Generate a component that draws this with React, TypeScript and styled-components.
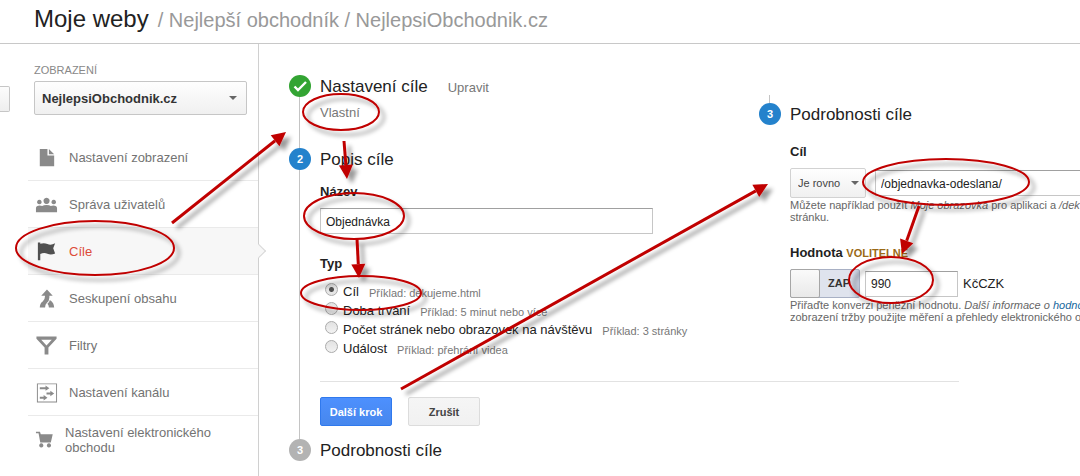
import React from "react";
import styled, { createGlobalStyle, css } from "styled-components";

const Global = createGlobalStyle`
  *, *::before, *::after { box-sizing: border-box; }
  body {
    margin: 0;
    background: #fff;
    color: #222;
    font: 13px/18px "Liberation Sans", Arial, sans-serif;
    overflow: hidden;
  }
  input, select, button { font-family: inherit; margin: 0; }
`;

const Page = styled.div`
  position: relative;
  min-height: 100vh;
  display: flex;
  flex-direction: column;
  overflow: hidden;
`;

const Header = styled.header`
  height: 44px;
  padding: 5px 34px 0;
  border-bottom: 1px solid #c8c8c8;
  white-space: nowrap;
`;

const Title = styled.h1`
  margin: 0;
  font-size: 24px;
  line-height: 28px;
  font-weight: 400;
`;

const Crumbs = styled.span`
  margin-left: 9px;
  font-size: 20px;
  color: #999;
`;

const Body = styled.div`
  flex: 1;
  display: flex;
`;

const Stub = styled.button`
  flex: none;
  width: 10px;
  height: 26px;
  margin-top: 42px;
  padding: 0;
  border: 1px solid #c6c6c6;
  border-left: 0;
  border-radius: 0 2px 2px 0;
  background: linear-gradient(#fcfcfc, #eee);
`;

const Sidebar = styled.nav`
  flex: none;
  width: 249px;
  padding: 18px 0 0 18px;
  border-right: 1px solid #d0d0d0;
`;

const ViewPicker = styled.div`
  padding: 0 11px 0 6px;
`;

const PickerLabel = styled.label`
  display: block;
  font-size: 11px;
  line-height: 16px;
  color: #888;
  margin-bottom: 3px;
`;

const SelectWrap = styled.div<{ $edge: number; $width?: number }>`
  position: relative;
  flex: none;
  width: ${(p) => (p.$width ? p.$width + "px" : "100%")};
  &::after {
    content: "";
    position: absolute;
    right: ${(p) => p.$edge}px;
    top: 50%;
    margin-top: -2px;
    border: 4px solid transparent;
    border-top-color: #666;
    border-bottom: 0;
    pointer-events: none;
  }
`;

const Select = styled.select<{ $strong?: boolean }>`
  appearance: none;
  display: block;
  width: 100%;
  height: ${(p) => (p.$strong ? 34 : 30)}px;
  padding: 0 7px;
  border: 1px solid ${(p) => (p.$strong ? "#c6c6c6" : "#d2d2d2")};
  border-radius: 2px;
  background: linear-gradient(#fefefe, #f0f0f0);
  color: ${(p) => (p.$strong ? "#333" : "#444")};
  font-size: ${(p) => (p.$strong ? 13 : 11)}px;
  font-weight: ${(p) => (p.$strong ? 700 : 400)};
`;

const Menu = styled.ul`
  list-style: none;
  margin: 19px 0 0;
  padding: 0;
`;

const MenuItem = styled.li<{ $active?: boolean }>`
  position: relative;
  height: 47px;
  border-bottom: 1px solid #eaeaea;
  &:last-child { border-bottom: 0; }
  ${(p) =>
    p.$active &&
    css`
      background: #f7f7f7;
      &::after {
        content: "";
        position: absolute;
        right: -6px;
        top: 18px;
        width: 10px;
        height: 10px;
        border: 1px solid #d8d8d8;
        border-left: 0;
        border-bottom: 0;
        background: #f7f7f7;
        transform: rotate(45deg);
      }
    `}
`;

const MenuLink = styled.a<{ $active?: boolean; $wide?: boolean }>`
  height: 100%;
  display: flex;
  align-items: center;
  gap: ${(p) => (p.$wide ? 7 : 11)}px;
  padding-left: 7px;
  color: ${(p) => (p.$active ? "#dd4b39" : "#737373")};
  line-height: 15px;
  text-decoration: none;
  svg { flex: none; fill: ${(p) => (p.$active ? "#505050" : "#8a8a8a")}; }
`;

const Main = styled.main`
  flex: 1;
  min-width: 0;
  display: grid;
  grid-template-columns: 470px minmax(0, 1fr);
  padding: 31px 0 0 30px;
`;

const Steps = styled.ol`
  list-style: none;
  margin: 0;
  padding: 0;
  min-width: 0;
`;

const Step = styled.li<{ $gap?: number; $line?: boolean }>`
  position: relative;
  padding: 0 0 ${(p) => p.$gap || 0}px 31px;
  ${(p) =>
    p.$line &&
    css`
      &::before {
        content: "";
        position: absolute;
        left: 10px;
        top: 0;
        bottom: 0;
        width: 1px;
        background: #c4c4c4;
      }
    `}
`;

const StepHead = styled.div`
  position: relative;
  display: flex;
  align-items: center;
  height: 22px;
  margin-left: -31px;
`;

const Badge = styled.span<{ $color: string }>`
  width: 22px;
  height: 22px;
  border-radius: 50%;
  background: ${(p) => p.$color};
  color: #fff;
  font-size: 11px;
  font-weight: 700;
  line-height: 22px;
  text-align: center;
  svg { display: block; }
`;

const StepTitle = styled.h2`
  margin: 0 20px 0 9px;
  padding-top: 2px;
  font-size: 17px;
  line-height: 22px;
  font-weight: 400;
`;

const EditLink = styled.a`
  color: #777;
  text-decoration: none;
  padding-top: 4px;
`;

const Chosen = styled.div`
  color: #777;
  margin-top: 7px;
`;

const FieldLabel = styled.label`
  display: block;
  margin: 13px 0 7px;
  font-weight: 700;
`;

const Group = styled.fieldset`
  margin: 21px 0 0;
  padding: 0;
  border: 0;
  min-width: 0;
`;

const Legend = styled.legend`
  padding: 0;
  margin: 0 0 7px;
  font-weight: 700;
`;

const TextBox = styled.input<{ $width?: number }>`
  width: ${(p) => (p.$width ? p.$width + "px" : "100%")};
  height: 26px;
  padding: 1px 5px 0;
  border: 1px solid #c6c6c6;
  border-top-color: #a0a0a0;
  background: #fff;
  color: #222;
  font-size: 12px;
  display: block;
`;

const RadioRow = styled.div`
  display: flex;
  align-items: center;
  height: 19px;
  padding-left: 5px;
  white-space: nowrap;
  label { margin: 4px 10px 0 5px; }
`;

const Radio = styled.input`
  appearance: none;
  width: 13px;
  height: 13px;
  margin: 0;
  border: 1px solid #ababab;
  border-radius: 50%;
  background: linear-gradient(#e2e2e2, #f2f2f2);
  &:checked {
    background: radial-gradient(circle, #505050 0 2px, #e6e6e6 3px);
  }
`;

const Hint = styled.small`
  font-size: 11px;
  color: #777;
  padding-top: 6px;
`;

const Rule = styled.hr`
  width: 639px;
  margin: 25px 0 15px;
  border: 0;
  border-top: 1px solid #e2e2e2;
`;

const Actions = styled.div`
  display: flex;
  gap: 16px;
`;

const Button = styled.button<{ $primary?: boolean }>`
  width: 72px;
  height: 29px;
  padding: 0;
  border: 1px solid ${(p) => (p.$primary ? "#3079ed" : "#dcdcdc")};
  border-radius: 2px;
  background: ${(p) => (p.$primary ? "linear-gradient(#4d90fe, #4787ed)" : "linear-gradient(#f5f5f5, #f1f1f1)")};
  color: ${(p) => (p.$primary ? "#fff" : "#444")};
  font-size: 11px;
  font-weight: 700;
`;

const Details = styled.section`
  position: relative;
  min-width: 0;
  padding: 28px 0 0 31px;
  white-space: nowrap;
  &::before {
    content: "";
    position: absolute;
    left: 10px;
    top: 20px;
    width: 1px;
    height: 8px;
    background: #c4c4c4;
  }
`;

const DetailLabel = styled.label<{ $first?: boolean }>`
  display: block;
  margin-top: ${(p) => (p.$first ? 18 : 21)}px;
  margin-bottom: 7px;
  font-weight: 700;
`;

const Optional = styled.span`
  color: #9b6a16;
  font-size: 11px;
`;

const Row = styled.div<{ $gap: number; $bleed?: boolean }>`
  display: flex;
  align-items: center;
  gap: ${(p) => p.$gap}px;
  margin-right: ${(p) => (p.$bleed ? "-8px" : "0")};
`;

const Note = styled.p`
  margin: 0;
  padding-top: 1px;
  font-size: 11px;
  line-height: 12px;
  color: #666;
  a { color: #15669c; text-decoration: none; }
`;

const Toggle = styled.button`
  display: flex;
  width: 70px;
  height: 29px;
  padding: 0;
  border: 1px solid #a8b0c4;
  border-radius: 2px;
  background: linear-gradient(90deg, #dfe3ed 85%, #c3cadb);
  color: #333;
  font-size: 11px;
  font-weight: 700;
  line-height: 27px;
  &::before {
    content: "";
    width: 30px;
    height: 29px;
    margin: -1px 8px 0 -1px;
    border: 1px solid #a6a6a6;
    border-radius: 2px;
    background: linear-gradient(#fafafa, #e9e9e9);
  }
`;

const Marks = styled.svg`
  position: absolute;
  left: 0;
  top: 0;
  pointer-events: none;
`;

const icons: Record<string, React.ReactNode> = {
  page: <path d="M5 3h8v7h7v11H5zM14.500 3l5.500 5.500h-5.500z" />,
  users: (
    <path d="M4.500 7a2.400 2.400 0 1 0 .1 0zM12 5a3.200 3.200 0 1 0 .1 0zM19.500 7a2.400 2.400 0 1 0 .1 0zM1 20v-4q0-3 4-3 1.500 0 2.500.5 1.500-1 4.500-1t4.500 1q1-.5 2.500-.5 4 0 4 3v4z" />
  ),
  flag: <path d="M3 2.500h2.500v1.500q4-1.500 7.500.300t8-.8l-2 5 2 5.500q-4.500 2-8 .300t-7.500.2v6.500H3z" />,
  merge: (
    <path d="M12.500 2.500l6 6.500h-3.500v2q-.2 4-2.500 5.500-2 1.500-2 5H5q0-4.500 3-6.500 2.500-2 2.500-6H6.500zM15.500 13.500q4.500 3 4.500 8h-5.500q0-2.500-1.500-4 2-1.500 2.500-4z" />
  ),
  filter: <path fillRule="evenodd" d="M1.500 2.500h21v2.500l-8.500 9v7.500h-4V14L1.500 5zM6.500 6l5.500 6 5.500-6z" />,
  channel: (
    <path
      fillRule="evenodd"
      d="M2 2.500h21v20H2zM3 3.500v18h19v-18zM5 6.500h6V4.700l4 2.800-4 2.800V8.500H5zM12 12h4v-1.800l4 2.800-4 2.800V14h-4zM5 16.500h4v-1.800l4 2.800-4 2.800V18.500H5z"
    />
  ),
  cart: (
    <path d="M1 4h4.200l.8 2.500h12.500L16.500 15H5.500L3.700 5.500H1zM6.500 16a2.200 2.200 0 1 0 .1 0zM14.500 16a2.200 2.200 0 1 0 .1 0z" />
  ),
};

const items = [
  { icon: "page", text: "Nastavení zobrazení" },
  { icon: "users", text: "Správa uživatelů" },
  { icon: "flag", text: "Cíle", active: true },
  { icon: "merge", text: "Seskupení obsahu" },
  { icon: "filter", text: "Filtry" },
  { icon: "channel", text: "Nastavení kanálu" },
  { icon: "cart", text: "Nastavení elektronického obchodu", wide: true },
];

const goalTypes = [
  { id: "cil", text: "Cíl", hint: "Příklad: dekujeme.html" },
  { id: "doba", text: "Doba trvání", hint: "Příklad: 5 minut nebo více" },
  { id: "pocet", text: "Počet stránek nebo obrazovek na návštěvu", hint: "Příklad: 3 stránky" },
  { id: "udalost", text: "Událost", hint: "Příklad: přehrání videa" },
];

const ellipses = [
  [95, 248, 79, 27],
  [341, 112, 38, 18],
  [354, 216, 50, 23],
  [361, 293, 60, 17],
  [946, 182, 83, 23],
  [891, 280, 42, 23],
];

const arrows = [
  [172, 223, 286, 132],
  [344, 141, 347, 179],
  [357, 239, 359, 278],
  [401, 389, 768, 184],
  [919, 206, 902, 254],
];

function Arrow({ p }: { p: number[] }) {
  const [x1, y1, x2, y2] = p;
  const len = Math.hypot(x2 - x1, y2 - y1);
  const ux = (x2 - x1) / len;
  const uy = (y2 - y1) / len;
  const bx = x2 - ux * 14;
  const by = y2 - uy * 14;
  return (
    <g>
      <line x1={x1} y1={y1} x2={bx} y2={by} stroke="#c00000" strokeWidth="3" />
      <polygon
        fill="#c00000"
        points={`${x2},${y2} ${bx - uy * 7},${by + ux * 7} ${bx + uy * 7},${by - ux * 7}`}
      />
    </g>
  );
}

export default function App() {
  return (
    <Page>
      <Global />
      <Header>
        <Title>
          Moje weby
          <Crumbs>/ Nejlepší obchodník / NejlepsiObchodnik.cz</Crumbs>
        </Title>
      </Header>
      <Body>
        <Stub aria-label="Služba" />
        <Sidebar>
          <ViewPicker>
            <PickerLabel htmlFor="view">ZOBRAZENÍ</PickerLabel>
            <SelectWrap $edge={10}>
              <Select id="view" $strong>
                <option>NejlepsiObchodnik.cz</option>
              </Select>
            </SelectWrap>
          </ViewPicker>
          <Menu>
            {items.map((it) => (
              <MenuItem key={it.icon} $active={it.active}>
                <MenuLink href="#" $active={it.active} $wide={it.wide}>
                  <svg width="23" height="23" viewBox="0 0 24 24">{icons[it.icon]}</svg>
                  <span>{it.text}</span>
                </MenuLink>
              </MenuItem>
            ))}
          </Menu>
        </Sidebar>
        <Main>
          <Steps>
            <Step $line $gap={26}>
              <StepHead>
                <Badge $color="#33a433">
                  <svg width="22" height="22" viewBox="0 0 22 22">
                    <path d="M5.500 11.500l3.500 3.500 8-8" fill="none" stroke="#fff" strokeWidth="2.400" />
                  </svg>
                </Badge>
                <StepTitle>Nastavení cíle</StepTitle>
                <EditLink href="#">Upravit</EditLink>
              </StepHead>
              <Chosen>Vlastní</Chosen>
            </Step>
            <Step $line $gap={13}>
              <StepHead>
                <Badge $color="#2482cc">2</Badge>
                <StepTitle>Popis cíle</StepTitle>
              </StepHead>
              <FieldLabel htmlFor="name">Název</FieldLabel>
              <TextBox id="name" defaultValue="Objednávka" $width={333} />
              <Group>
                <Legend>Typ</Legend>
                {goalTypes.map((g, i) => (
                  <RadioRow key={g.id}>
                    <Radio type="radio" name="type" id={g.id} defaultChecked={i === 0} />
                    <label htmlFor={g.id}>{g.text}</label>
                    <Hint>{g.hint}</Hint>
                  </RadioRow>
                ))}
              </Group>
              <Rule />
              <Actions>
                <Button $primary>Další krok</Button>
                <Button>Zrušit</Button>
              </Actions>
            </Step>
            <Step>
              <StepHead>
                <Badge $color="#b3b3b3">3</Badge>
                <StepTitle>Podrobnosti cíle</StepTitle>
              </StepHead>
            </Step>
          </Steps>
          <Details>
            <StepHead>
              <Badge $color="#2482cc">3</Badge>
              <StepTitle>Podrobnosti cíle</StepTitle>
            </StepHead>
            <DetailLabel htmlFor="target" $first>Cíl</DetailLabel>
            <Row $gap={9} $bleed>
              <SelectWrap $edge={7} $width={76}>
                <Select aria-label="Shoda">
                  <option>Je rovno</option>
                </Select>
              </SelectWrap>
              <TextBox id="target" defaultValue="/objednavka-odeslana/" />
            </Row>
            <Note>
              Můžete například použít <i>Moje obrazovka</i> pro aplikaci a <i>/dek</i>
              <br />
              stránku.
            </Note>
            <DetailLabel htmlFor="value">
              Hodnota <Optional>VOLITELNÉ</Optional>
            </DetailLabel>
            <Row $gap={5}>
              <Toggle aria-pressed="true">ZAP</Toggle>
              <TextBox id="value" defaultValue="990" $width={93} />
              <span>KčCZK</span>
            </Row>
            <Note>
              Přiřaďte konverzi peněžní hodnotu. <i>Další informace o <a href="#">hodno</a></i>
              <br />
              zobrazení tržby použijte měření a přehledy elektronického o
            </Note>
          </Details>
        </Main>
      </Body>
      <Marks width="1080" height="476" viewBox="0 0 1080 476" aria-hidden="true">
        <defs>
          <filter id="shade" filterUnits="userSpaceOnUse" x="0" y="0" width="1080" height="476">
            <feDropShadow dx="5" dy="5" stdDeviation="2" floodColor="#000" floodOpacity="0.4" />
          </filter>
        </defs>
        <g filter="url(#shade)">
          {ellipses.map(([cx, cy, rx, ry]) => (
            <ellipse key={cx} cx={cx} cy={cy} rx={rx} ry={ry} fill="none" stroke="#c00000" strokeWidth="2" />
          ))}
          {arrows.map((p) => (
            <Arrow key={p[0]} p={p} />
          ))}
        </g>
      </Marks>
    </Page>
  );
}
